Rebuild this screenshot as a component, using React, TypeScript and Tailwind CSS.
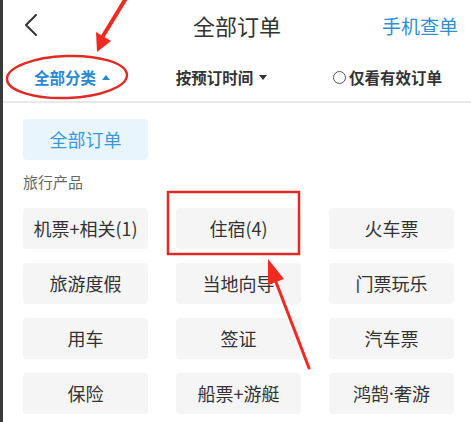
import React from 'react';

const font = { fontFamily: '"Noto Sans CJK SC", "Noto Sans", sans-serif' };

const products: React.ReactNode[] = [
  '机票+相关(1)',
  '住宿(4)',
  '火车票',
  '旅游度假',
  '当地向导',
  '门票玩乐',
  '用车',
  '签证',
  '汽车票',
  '保险',
  '船票+游艇',
  <>
    鸿鹄<span className="font-['Noto_Sans',sans-serif]">·</span>奢游
  </>,
];

const App: React.FC = () => {
  return (
    <div className="relative flex w-[471px] h-[422px] overflow-hidden bg-white" style={font}>
      {/* dark edge on the left */}
      <div className="w-[3px] bg-[#3a3a3a]" />

      <div className="flex-1 flex flex-col">
        {/* header */}
        <div className="grid grid-cols-[1fr_auto_1fr] items-center h-[50px]">
          <div className="pl-[20px]">
            <svg width="16" height="24" viewBox="0 0 16 24" fill="none">
              <path d="M13 2 L3 12 L13 22" stroke="#333" strokeWidth="2" strokeLinecap="round" strokeLinejoin="round" />
            </svg>
          </div>
          <div className="text-[22px] text-[#333] leading-none">全部订单</div>
          <div className="text-right pr-[13px] text-[19px] text-[#2f8fd3] leading-none">手机查单</div>
        </div>

        {/* filter tabs */}
        <div className="flex items-center justify-between h-[51px] pl-[31px] pr-[29px] pt-[4px] text-[15.5px] font-bold leading-none">
          <div className="flex items-center gap-[6px] text-[#2a88d2]">
            全部分类
            <svg width="8" height="5" viewBox="0 0 8 5"><path d="M0 5 L4 0 L8 5 Z" fill="#2a88d2" /></svg>
          </div>
          <div className="flex items-center gap-[6px] text-[#333]">
            按预订时间
            <svg width="8" height="5" viewBox="0 0 8 5"><path d="M0 0 L8 0 L4 5 Z" fill="#333" /></svg>
          </div>
          <div className="flex items-center gap-[3px] text-[#333]">
            <span className="w-[13px] h-[13px] rounded-full border border-[#555]" />
            仅看有效订单
          </div>
        </div>
        <div className="h-[2px] bg-[#e8e8e8]" />

        {/* content */}
        <div className="pl-[20px] pt-[16px]">
          <div className="w-[125px] h-[41px] rounded-[4px] bg-[#e9f5fc] flex items-center justify-center text-[18px] text-[#3a9ad8]">
            全部订单
          </div>
          <div className="mt-[14px] text-[15px] text-[#666] leading-none">旅行产品</div>
          <div className="mt-[19px] grid grid-cols-[125px_125px_125px] gap-x-[28px] gap-y-[14px]">
            {products.map((p, i) => (
              <div
                key={i}
                className="h-[41px] rounded-[4px] bg-[#f5f5f5] flex items-center justify-center text-[18px] text-[#333]"
              >
                {p}
              </div>
            ))}
          </div>
        </div>
      </div>

      {/* red annotations */}
      <svg className="absolute inset-0 pointer-events-none" width="471" height="422" viewBox="0 0 471 422">
        <ellipse cx="67" cy="77" rx="60" ry="21" fill="none" stroke="#e02b25" strokeWidth="2.5" transform="rotate(-2 67 77)" />
        <path d="M125 0 L103 36" stroke="#ee2a22" strokeWidth="4" strokeLinecap="round" />
        <path d="M97 52 L96 32 L111 41 Z" fill="#ee2a22" />
        <rect x="168" y="192" width="131" height="62" fill="none" stroke="#e02b25" strokeWidth="2.5" />
        <path d="M309 368 L276 282" stroke="#ee2a22" strokeWidth="3" strokeLinecap="round" />
        <path d="M268 259 L268 285 L284 279 Z" fill="#ee2a22" />
      </svg>
    </div>
  );
};

export default App;
